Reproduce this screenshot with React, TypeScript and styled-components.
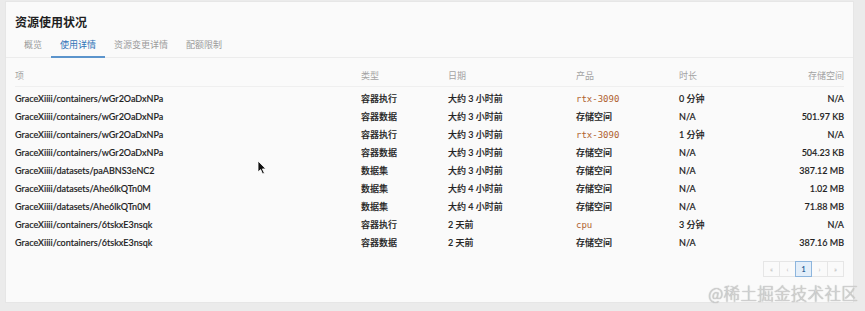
import React from "react";
import styled, { createGlobalStyle } from "styled-components";

const Global = createGlobalStyle`
  html, body { margin: 0; padding: 0; background: #ebebeb; }
  body { font-family: Lato, "Noto Sans CJK SC", sans-serif; width: 865px; height: 311px; overflow: hidden; }
`;

const Page = styled.div`
  position: relative;
  width: 865px;
  height: 311px;
  padding: 2px 12px 0 6px;
  box-sizing: border-box;
`;

const Card = styled.div`
  background: #fafafa;
  height: 300px;
  box-sizing: border-box;
  padding: 12px 9px 0 9px;
  display: flex;
  flex-direction: column;
  box-shadow: 0 0 0 1px #e6e6e6;
`;

const Title = styled.h1`
  margin: 0;
  font-size: 12px;
  line-height: 16px;
  font-weight: 700;
  color: #1f1f1f;
  font-family: "Noto Sans CJK SC", sans-serif;
`;

const Tabs = styled.div`
  display: flex;
  margin: 8px -9px 0 -9px;
  padding: 0 9px;
  border-bottom: 1px solid #ececec;
`;

const Tab = styled.div<{ $active?: boolean }>`
  font-size: 9px;
  line-height: 13px;
  padding: 0 9px 5px;
  color: ${(p) => (p.$active ? "#2f73b8" : "#9a9a9a")};
  border-bottom: 2px solid ${(p) => (p.$active ? "#5b94cc" : "transparent")};
  margin-bottom: -1px;
  font-family: "Noto Sans CJK SC", sans-serif;
`;

const Grid = styled.div`
  display: grid;
  grid-template-columns: 346px 87px 128px 103px 80px 85px;
  margin-top: 12px;
`;

const HeadCell = styled.div<{ $right?: boolean }>`
  font-size: 9px;
  line-height: 12px;
  color: #a3a3a3;
  padding-bottom: 4px;
  border-bottom: 1px solid #efefef;
  text-align: ${(p) => (p.$right ? "right" : "left")};
  font-family: "Noto Sans CJK SC", sans-serif;
`;

const Cell = styled.div<{ $right?: boolean; $mono?: boolean }>`
  font-size: 9px;
  height: 18px;
  line-height: 18px;
  color: ${(p) => (p.$mono ? "#b0622f" : "#222")};
  font-weight: ${(p) => (p.$mono ? 400 : 500)};
  font-family: ${(p) =>
    p.$mono ? '"DejaVu Sans Mono", monospace' : 'Lato, "Noto Sans CJK SC", sans-serif'};
  text-align: ${(p) => (p.$right ? "right" : "left")};
  white-space: nowrap;
  -webkit-text-stroke: ${(p) => (p.$mono ? "0" : "0.15px #222")};
`;

const FirstRowGap = styled.div`
  grid-column: 1 / -1;
  height: 3px;
`;

const Pager = styled.div`
  display: flex;
  justify-content: flex-end;
  margin-top: 9px;
`;

const PageBtn = styled.div<{ $active?: boolean }>`
  width: 17px;
  height: 16px;
  box-sizing: border-box;
  display: flex;
  align-items: center;
  justify-content: center;
  font-size: 7px;
  font-family: Lato, sans-serif;
  font-weight: ${(p) => (p.$active ? 700 : 400)};
  color: ${(p) => (p.$active ? "#2b5f94" : "#b5b5b5")};
  background: ${(p) => (p.$active ? "#e3eef9" : "#fafafa")};
  border: 1px solid ${(p) => (p.$active ? "#8db5dd" : "#e6e6e6")};
  margin-left: -1px;
  position: relative;
  z-index: ${(p) => (p.$active ? 1 : 0)};
`;

const Watermark = styled.div`
  position: absolute;
  right: 7px;
  bottom: 9px;
  font-size: 16.5px;
  line-height: 18px;
  color: #d4d4d4;
  font-family: "Noto Sans CJK SC", sans-serif;
  font-weight: 300;
  text-shadow: 0 0 1px #8a8a8a;
  letter-spacing: 0.3px;
`;

const Cursor = styled.svg`
  position: absolute;
  left: 257px;
  top: 160px;
`;

type Row = {
  item: string;
  type: string;
  date: string;
  product: string;
  mono?: boolean;
  dur: string;
  size: string;
};

const rows: Row[] = [
  { item: "GraceXiiii/containers/wGr2OaDxNPa", type: "容器执行", date: "大约 3 小时前", product: "rtx-3090", mono: true, dur: "0 分钟", size: "N/A" },
  { item: "GraceXiiii/containers/wGr2OaDxNPa", type: "容器数据", date: "大约 3 小时前", product: "存储空间", dur: "N/A", size: "501.97 KB" },
  { item: "GraceXiiii/containers/wGr2OaDxNPa", type: "容器执行", date: "大约 3 小时前", product: "rtx-3090", mono: true, dur: "1 分钟", size: "N/A" },
  { item: "GraceXiiii/containers/wGr2OaDxNPa", type: "容器数据", date: "大约 3 小时前", product: "存储空间", dur: "N/A", size: "504.23 KB" },
  { item: "GraceXiiii/datasets/paABNS3eNC2", type: "数据集", date: "大约 3 小时前", product: "存储空间", dur: "N/A", size: "387.12 MB" },
  { item: "GraceXiiii/datasets/Ahe6lkQTn0M", type: "数据集", date: "大约 4 小时前", product: "存储空间", dur: "N/A", size: "1.02 MB" },
  { item: "GraceXiiii/datasets/Ahe6lkQTn0M", type: "数据集", date: "大约 4 小时前", product: "存储空间", dur: "N/A", size: "71.88 MB" },
  { item: "GraceXiiii/containers/6tskxE3nsqk", type: "容器执行", date: "2 天前", product: "cpu", mono: true, dur: "3 分钟", size: "N/A" },
  { item: "GraceXiiii/containers/6tskxE3nsqk", type: "容器数据", date: "2 天前", product: "存储空间", dur: "N/A", size: "387.16 MB" },
];

export default function App() {
  return (
    <>
      <Global />
      <Page>
        <Card>
          <Title>资源使用状况</Title>
          <Tabs>
            <Tab>概览</Tab>
            <Tab $active>使用详情</Tab>
            <Tab>资源变更详情</Tab>
            <Tab>配额限制</Tab>
          </Tabs>
          <Grid>
            <HeadCell>项</HeadCell>
            <HeadCell>类型</HeadCell>
            <HeadCell>日期</HeadCell>
            <HeadCell>产品</HeadCell>
            <HeadCell>时长</HeadCell>
            <HeadCell $right>存储空间</HeadCell>
            <FirstRowGap />
            {rows.map((r, i) => (
              <React.Fragment key={i}>
                <Cell>{r.item}</Cell>
                <Cell>{r.type}</Cell>
                <Cell>{r.date}</Cell>
                <Cell $mono={r.mono}>{r.product}</Cell>
                <Cell>{r.dur}</Cell>
                <Cell $right>{r.size}</Cell>
              </React.Fragment>
            ))}
          </Grid>
          <Pager>
            <PageBtn>«</PageBtn>
            <PageBtn>‹</PageBtn>
            <PageBtn $active>1</PageBtn>
            <PageBtn>›</PageBtn>
            <PageBtn>»</PageBtn>
          </Pager>
        </Card>
        <Watermark>@稀土掘金技术社区</Watermark>
        <Cursor width="10" height="15" viewBox="0 0 10 15">
          <path d="M1 1 L1 12 L3.6 9.6 L5.6 14 L7.4 13.2 L5.4 8.9 L8.8 8.9 Z" fill="#111" stroke="#fff" strokeWidth="0.8" />
        </Cursor>
      </Page>
    </>
  );
}
